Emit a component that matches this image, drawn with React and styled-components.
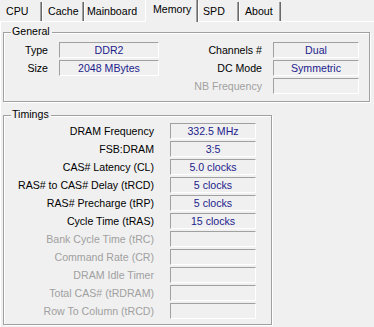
import React from "react";
import styled, { createGlobalStyle } from "styled-components";

const Global = createGlobalStyle`
  html, body { margin: 0; padding: 0; background: #f0f0f0; }
  body { font-family: "Liberation Sans", Arial, sans-serif; font-size: 10.6px; color: #000; }
`;

const Window = styled.div`
  width: 374px;
  height: 327px;
  overflow: hidden;
  background: #f0f0f0;
`;

const TabStrip = styled.div`
  display: flex;
  align-items: flex-end;
  height: 21px;
`;

const Tab = styled.div`
  position: relative;
  box-sizing: border-box;
  width: ${(p) => p.$w}px;
  height: ${(p) => (p.$active ? 22 : 19)}px;
  margin-bottom: ${(p) => (p.$active ? -1 : 0)}px;
  z-index: ${(p) => (p.$active ? 2 : 1)};
  padding-left: ${(p) => p.$pad}px;
  padding-top: 3px;
  line-height: 13px;
  background: #f0f0f0;
  border-left: 1px solid ${(p) => (p.$first ? "transparent" : "#ffffff")};
  border-right: 1px solid ${(p) => (p.$hideEdge ? "transparent" : "#696969")};
  box-shadow: ${(p) => (p.$hideEdge ? "none" : "inset -1px 0 0 #a0a0a0")};
  white-space: nowrap;
`;

const Page = styled.div`
  box-sizing: border-box;
  height: 306px;
  border-top: 1px solid #ffffff;
  border-left: 1px solid #ffffff;
  padding: 10px 4px 0 2px;
  display: flex;
  flex-direction: column;
  align-items: flex-start;
`;

const Group = styled.div`
  position: relative;
  box-sizing: border-box;
  width: ${(p) => p.$w}px;
  height: ${(p) => p.$h}px;
  margin-top: ${(p) => p.$mt || 0}px;
  border: 1px solid #a0a0a0;
  box-shadow: inset 1px 1px 0 #ffffff, 1px 1px 0 #ffffff;
`;

const Legend = styled.span`
  position: absolute;
  left: 7px;
  top: -8px;
  padding: 0 2px 0 1px;
  line-height: 13px;
  background: #f0f0f0;
`;

const GeneralGrid = styled.div`
  display: grid;
  grid-template-columns: 44px 100px 1fr 86px;
  grid-auto-rows: 16px;
  column-gap: 11px;
  row-gap: 2px;
  padding: 9px 10px 0 0;
`;

const TimingsGrid = styled.div`
  display: grid;
  grid-template-columns: 150px 86px;
  grid-auto-rows: 16px;
  column-gap: 16px;
  row-gap: 2px;
  padding: 7px 0 0 0;
`;

const Label = styled.div`
  grid-column: ${(p) => p.$col || "auto"};
  text-align: right;
  line-height: 16px;
  white-space: nowrap;
  color: ${(p) => (p.$disabled ? "#a0a0a0" : "#000000")};
`;

const Value = styled.div`
  grid-column: ${(p) => p.$col || "auto"};
  box-sizing: border-box;
  height: 16px;
  line-height: 14px;
  text-align: center;
  white-space: nowrap;
  color: #1c1c8c;
  border-top: 1px solid #a0a0a0;
  border-left: 1px solid #a0a0a0;
  border-bottom: 1px solid #ffffff;
  border-right: 1px solid #ffffff;
`;

const tabs = [
  { name: "CPU", w: 42, pad: 5, first: true },
  { name: "Cache", w: 42, pad: 5 },
  { name: "Mainboard", w: 61, pad: 2, hideEdge: true },
  { name: "Memory", w: 53, pad: 7, active: true },
  { name: "SPD", w: 41, pad: 4 },
  { name: "About", w: 42, pad: 5 },
];

const general = [
  ["Type", "DDR2", "Channels #", "Dual"],
  ["Size", "2048 MBytes", "DC Mode", "Symmetric"],
  [null, null, "NB Frequency", ""],
];

const timings = [
  ["DRAM Frequency", "332.5 MHz"],
  ["FSB:DRAM", "3:5"],
  ["CAS# Latency (CL)", "5.0 clocks"],
  ["RAS# to CAS# Delay (tRCD)", "5 clocks"],
  ["RAS# Precharge (tRP)", "5 clocks"],
  ["Cycle Time (tRAS)", "15 clocks"],
  ["Bank Cycle Time (tRC)", null],
  ["Command Rate (CR)", null],
  ["DRAM Idle Timer", null],
  ["Total CAS# (tRDRAM)", null],
  ["Row To Column (tRCD)", null],
];

export default function App() {
  return (
    <Window>
      <Global />
      <TabStrip>
        {tabs.map((t) => (
          <Tab
            key={t.name}
            $w={t.w}
            $pad={t.pad}
            $active={t.active}
            $first={t.first}
            $hideEdge={t.hideEdge}
          >
            {t.name}
          </Tab>
        ))}
      </TabStrip>
      <Page>
        <Group $w={367} $h={70}>
          <Legend>General</Legend>
          <GeneralGrid>
            {general.map(([l1, v1, l2, v2], i) => (
              <React.Fragment key={i}>
                {l1 ? <Label $col={1}>{l1}</Label> : null}
                {l1 ? <Value $col={2}>{v1}</Value> : null}
                <Label $col={3} $disabled={v2 === ""}>{l2}</Label>
                <Value $col={4}>{v2}</Value>
              </React.Fragment>
            ))}
          </GeneralGrid>
        </Group>
        <Group $w={269} $h={210} $mt={13}>
          <Legend>Timings</Legend>
          <TimingsGrid>
            {timings.map(([l, v]) => (
              <React.Fragment key={l}>
                <Label $disabled={v === null}>{l}</Label>
                <Value>{v || ""}</Value>
              </React.Fragment>
            ))}
          </TimingsGrid>
        </Group>
      </Page>
    </Window>
  );
}
